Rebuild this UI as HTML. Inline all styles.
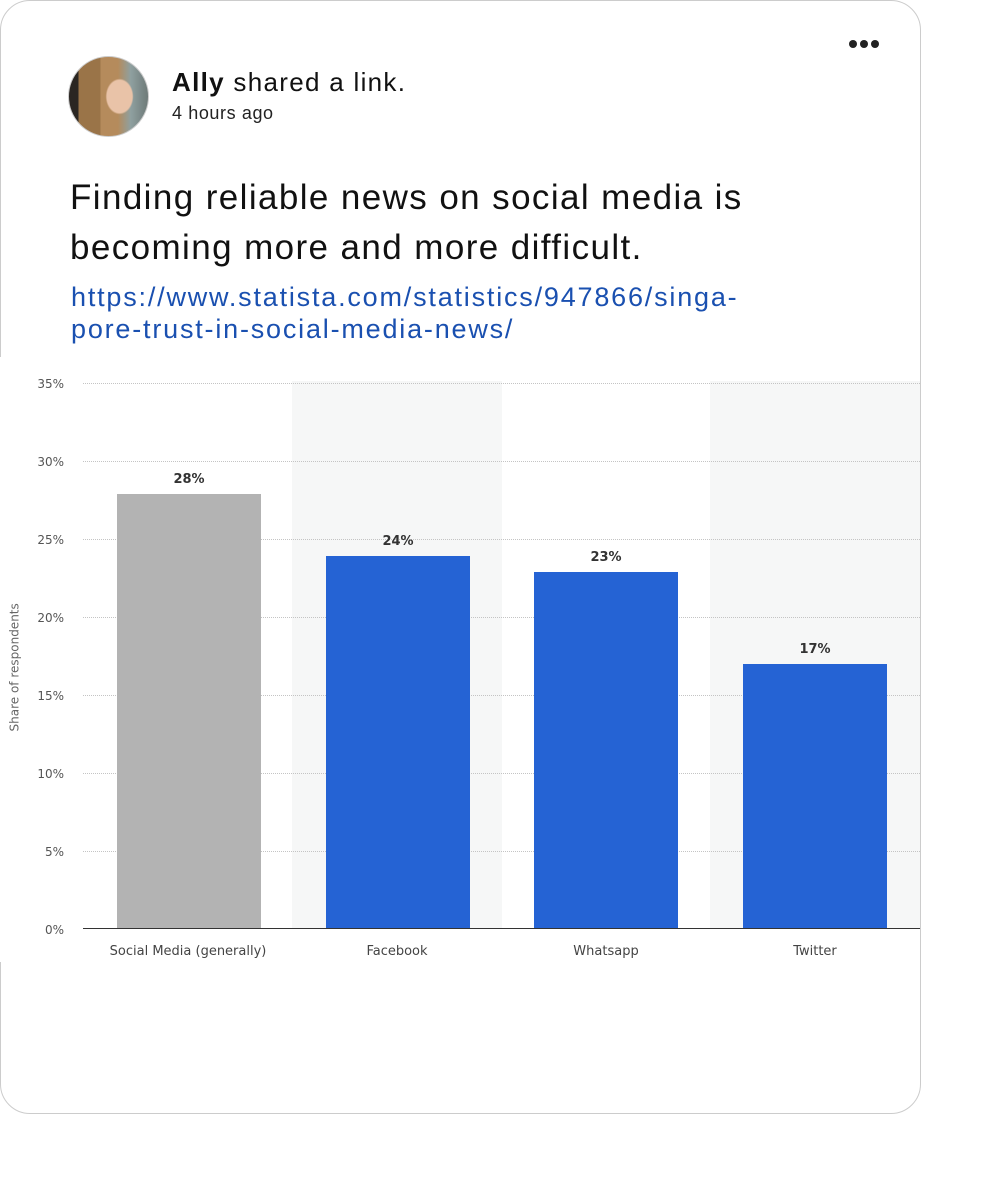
<!DOCTYPE html>
<html><head><meta charset="utf-8"><style>
*{margin:0;padding:0;box-sizing:border-box}
body{width:1000px;height:1200px;background:#fff;position:relative;font-family:"Liberation Sans",sans-serif;overflow:hidden}
.card{position:absolute;left:0;top:0;width:921px;height:1114px;border:1px solid #ccc;border-radius:30px;background:#fff}
.av{position:absolute;left:67px;top:55px;width:81px;height:81px;border-radius:50%;border:1px solid #ccc;background:radial-gradient(ellipse 14px 18px at 64% 50%,#e9c3a8 0 90%,transparent 100%),linear-gradient(90deg,#2a2622 0 12%,#9a7448 12% 40%,#b58b5c 40% 62%,#8fa0a0 78%,#6e7a78 100%)}
.name{position:absolute;left:171px;top:66px;font-size:26px;color:#111;letter-spacing:1.3px;white-space:nowrap}
.time{position:absolute;left:171px;top:102px;font-size:18px;color:#222;letter-spacing:0.6px}
.dots{position:absolute;left:848px;top:39px;white-space:nowrap;line-height:0}
.dots i{display:inline-block;width:8px;height:8px;border-radius:50%;background:#222;margin-right:3px}
.txt{position:absolute;left:69px;top:172px;font-size:35px;line-height:50px;color:#111;width:800px;letter-spacing:1.4px}
.lnk{position:absolute;left:70px;top:280px;font-size:27px;line-height:32px;color:#1a50b0;width:800px;letter-spacing:1.8px;white-space:nowrap}
.chart{position:absolute;left:0;top:357px;width:920px;height:605px;background:#fff;font-family:"DejaVu Sans",sans-serif}
.stripe{position:absolute;top:24px;height:548px;background:#f6f7f7;width:210px}
.grid{position:absolute;left:83px;width:837px;border-top:1px dotted #c4c4c4;height:0}
.yl{position:absolute;left:0;width:64px;text-align:right;font-size:12px;color:#555;margin-top:2px}
.bar{position:absolute;width:144px;background:#2563d4}
.vl{position:absolute;width:144px;text-align:center;font-size:13px;font-weight:bold;color:#333;margin-top:1px}
.xl{position:absolute;width:210px;text-align:center;font-size:13px;color:#444;top:587px}
.axis{position:absolute;left:83px;width:837px;top:571px;border-top:1px solid #333}
.ytitle{position:absolute;left:-48px;top:305px;transform:rotate(-90deg);font-size:12px;color:#666;width:125px;text-align:center;white-space:nowrap}
</style></head><body>
<div class="card">
<div class="av"></div>
<div class="name"><b>Ally</b> shared a link.</div>
<div class="time">4 hours ago</div>
<div class="dots"><i></i><i></i><i></i></div>
<div class="txt">Finding reliable news on social media is<br>becoming more and more difficult.</div>
<div class="lnk">https://www.statista.com/statistics/947866/singa-<br>pore-trust-in-social-media-news/</div>
</div>
<div class="chart">
<div class="stripe" style="left:292px"></div>
<div class="stripe" style="left:710px"></div>
<div class="grid" style="top:26px"></div>
<div class="grid" style="top:104px"></div>
<div class="grid" style="top:182px"></div>
<div class="grid" style="top:260px"></div>
<div class="grid" style="top:338px"></div>
<div class="grid" style="top:416px"></div>
<div class="grid" style="top:494px"></div>
<div class="yl" style="top:18px">35%</div>
<div class="yl" style="top:96px">30%</div>
<div class="yl" style="top:174px">25%</div>
<div class="yl" style="top:252px">20%</div>
<div class="yl" style="top:330px">15%</div>
<div class="yl" style="top:408px">10%</div>
<div class="yl" style="top:486px">5%</div>
<div class="yl" style="top:564px">0%</div>
<div class="ytitle">Share of respondents</div>
<div class="bar" style="left:117px;top:137px;height:435px;background:#b3b3b3"></div>
<div class="bar" style="left:326px;top:199px;height:373px"></div>
<div class="bar" style="left:534px;top:215px;height:357px"></div>
<div class="bar" style="left:743px;top:307px;height:265px"></div>
<div class="vl" style="left:117px;top:114px">28%</div>
<div class="vl" style="left:326px;top:176px">24%</div>
<div class="vl" style="left:534px;top:192px">23%</div>
<div class="vl" style="left:743px;top:284px">17%</div>
<div class="axis"></div>
<div class="xl" style="left:83px">Social Media (generally)</div>
<div class="xl" style="left:292px">Facebook</div>
<div class="xl" style="left:501px">Whatsapp</div>
<div class="xl" style="left:710px">Twitter</div>
</div>
</body></html>
